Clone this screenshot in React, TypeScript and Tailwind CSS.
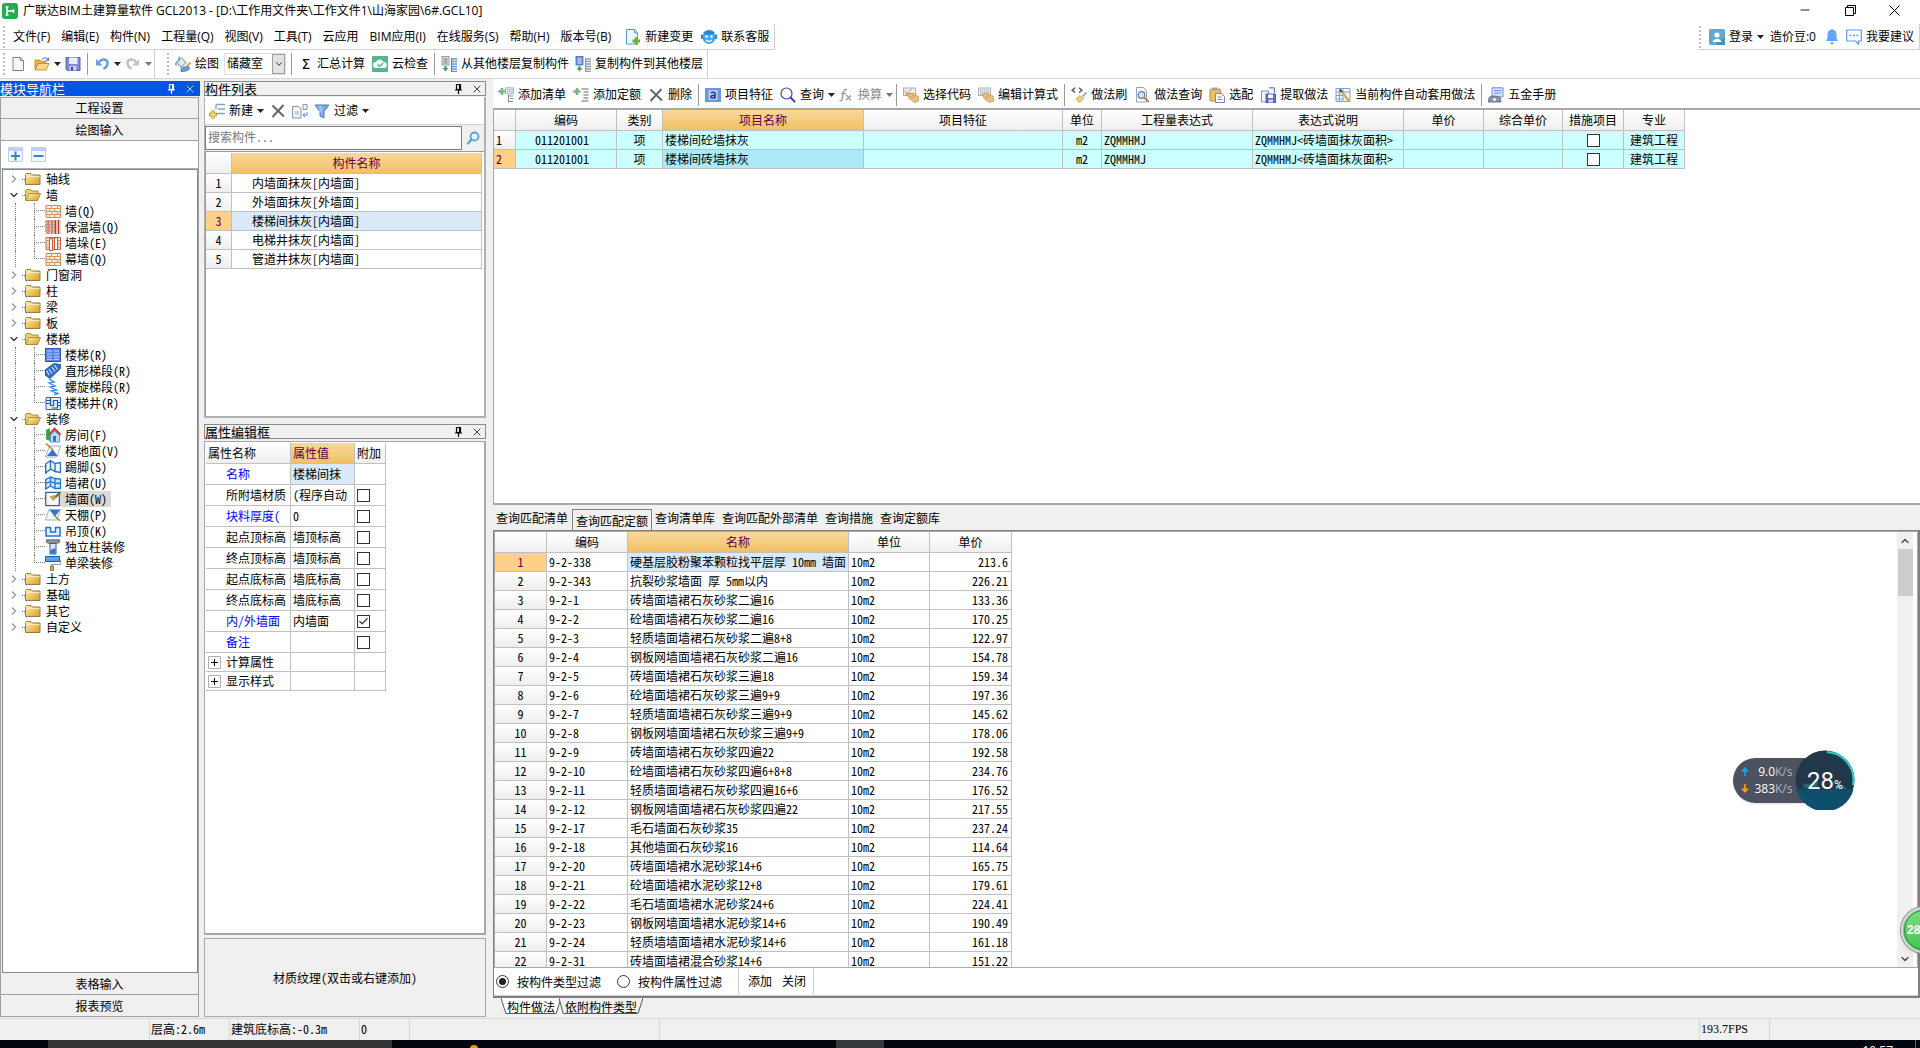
import React from 'react';
import type { ReactNode } from 'react';
import { Check, ChevronDown, ChevronRight, ChevronUp, X, Minus } from 'lucide-react';

/* ---------- icons ---------- */

function Svg({ children, size = 16 }: { children: ReactNode; size?: number }) {
  return (
    <svg width={size} height={size} viewBox="0 0 16 16" fill="none" className="block shrink-0" aria-hidden="true">
      {children}
    </svg>
  );
}

const LogoIcon = () => (
  <Svg>
    <rect width="16" height="16" rx="3" fill="#27a94f" />
    <path d="M5 3.500v9M3.500 4h3M3.500 12h3M5 8h6.500M11.500 6v4" stroke="#fff" strokeWidth="1.600" />
  </Svg>
);

const NewFileIcon = () => (
  <Svg>
    <path d="M3 1.500h7.500l3 3V14.500H3z" fill="#f4f8ff" stroke="#6f86a8" />
    <path d="M10.500 1.500v3h3" fill="#cfdcf0" stroke="#6f86a8" />
  </Svg>
);

const OpenIcon = () => (
  <Svg>
    <path d="M1 14V4h5l1 1.500h5V8" fill="#e9b44c" stroke="#b9802a" strokeWidth=".8" />
    <path d="M1 14 4 7.500h11L12 14z" fill="#f9d98a" stroke="#b9802a" strokeWidth=".8" />
    <path d="M8 3.500c2-2.500 5-2 6 .5M14.500 1.500V4.500H11.500" stroke="#6b8fb8" strokeWidth="1.200" />
  </Svg>
);

const SaveIcon = () => (
  <Svg>
    <path d="M1 1.500h14v13H2.500L1 13z" fill="#7f88da" stroke="#5560b8" />
    <rect x="4" y="1.500" width="8.500" height="6.500" fill="#e8edfb" />
    <rect x="4.500" y="10" width="7" height="4.500" fill="#c8cfe8" />
    <rect x="6" y="11" width="2" height="3.500" fill="#3a4490" />
  </Svg>
);

const UndoIcon = ({ redo = false }: { redo?: boolean }) => (
  <Svg>
    <g transform={redo ? 'matrix(-1 0 0 1 16 0)' : undefined} stroke={redo ? '#c2c2c2' : '#6d9be6'} fill="none">
      <path d="M5 6.500c2-4 8-4 8.500 0 .3 3-1.500 5-4 6.500" strokeWidth="2.600" />
      <path d="M2 3v6.500h6.500z" fill={redo ? '#c2c2c2' : '#6d9be6'} stroke="none" />
    </g>
  </Svg>
);

const BucketIcon = () => (
  <Svg>
    <path d="M1.500 6 6 1.500l5 5-5 5z" fill="#dfe8f5" stroke="#5c7fae" />
    <path d="M4 .5v5M1.500 6c-1 1-1 3 0 4" stroke="#5c7fae" />
    <path d="M6 13c2-2.500 5-2 7.500-3l1 3c-2 2-5 2.500-8.500 2.500z" fill="#6f9ade" stroke="#3c62a8" strokeWidth=".7" />
    <path d="M12 10l3.500-3.500" stroke="#e0a63a" strokeWidth="2.200" />
  </Svg>
);

const CloudCheckIcon = () => (
  <Svg>
    <rect width="16" height="16" fill="#56b88a" />
    <path d="M4 12a3 3 0 0 1 0-6 4 4 0 0 1 7.500 0A3 3 0 0 1 12 12z" fill="#fff" />
    <path d="M5.500 8.500 7.500 10.500 11 7" stroke="#56b88a" strokeWidth="1.500" />
  </Svg>
);

const FloorCopyIcon = ({ blue = false }: { blue?: boolean }) => (
  <Svg>
    <rect x="1" y="0.500" width="7" height="8.500" fill={blue ? '#6e92d6' : '#e2e2e2'} stroke={blue ? '#4566aa' : '#8a8a8a'} strokeWidth=".8" />
    <path d="M2.500 3h4M2.500 5h4M2.500 7h4" stroke={blue ? '#fff' : '#555'} strokeWidth=".8" />
    <path d="M4.500 10v2" stroke="#3da858" strokeWidth="2" />
    <path d="M1.500 12h6l-3 3.500z" fill="#3da858" />
    <path d="M11 3h5M11 5.500h5M11 8h5M11 10.500h5M11 13h5M11 15.500h5" stroke={blue ? '#8a9bb5' : '#5f92dc'} strokeWidth="1.300" />
    <path d="M10.500 2v14" stroke={blue ? '#8a9bb5' : '#4a7ccb'} />
  </Svg>
);

const NewChangeIcon = () => (
  <Svg>
    <path d="M1.500.5h8l3 3.500v11h-11z" fill="#eef7fd" stroke="#4b9fd6" />
    <path d="M9.500.5V4h3" stroke="#4b9fd6" fill="#bfe0f5" />
    <path d="M7.500 12h7.500M11.300 8.300v7.500" stroke="#63b82e" strokeWidth="3" />
  </Svg>
);

const ServiceIcon = () => (
  <Svg>
    <circle cx="8" cy="8.500" r="6.500" fill="#41a8ea" />
    <path d="M1 5.500v4.500M15 5.500v4.500" stroke="#2b87c9" strokeWidth="2" />
    <path d="M2 4c3-4 9-4 12 0l-2 1.500H4z" fill="#2b87c9" />
    <circle cx="5.500" cy="7.500" r="1.200" fill="#fff" />
    <circle cx="10.500" cy="7.500" r="1.200" fill="#fff" />
    <path d="M5 11c2 1.800 4 1.800 6 0" stroke="#fff" strokeWidth="1.200" />
  </Svg>
);

const UserIcon = () => (
  <Svg>
    <rect width="16" height="16" rx="2" fill="#62a8cf" />
    <path d="M8 13 16 8v8H8z" fill="#4c8fb5" />
    <circle cx="8" cy="6" r="2.600" fill="#fff" />
    <path d="M3.500 13c.5-4 8.500-4 9 0z" fill="#fff" />
  </Svg>
);

const BellIcon = () => (
  <Svg>
    <path d="M8 .5c-3 0-4.500 2.500-4.500 5v3.500L2 12h12l-1.500-3V5.500c0-2.500-1.500-5-4.500-5z" fill="#62a6fa" />
    <path d="M5.500 13.300h5L8 15.800z" fill="#62a6fa" />
  </Svg>
);

const CommentIcon = () => (
  <Svg>
    <path d="M.7 1h14.600v11h-2.800v3.300l-3-3.300H.7z" stroke="#5a9be8" strokeWidth="1.200" fill="#fff" />
    <path d="M3.500 6.500h2M7 6.500h2M10.500 6.500h2" stroke="#5a9be8" strokeWidth="1.300" />
  </Svg>
);

const ListAddIcon = ({ boxes = false }: { boxes?: boolean }) => (
  <Svg>
    <path d="M.3 4.500h7.200M4 1v7" stroke="#79b487" strokeWidth="2.600" />
    {boxes ? (
      <>
        <path d="M7.500.8h8v6h-8z" fill="#eef1f6" stroke="#a3adbd" />
        <path d="M9 2.800h5.500M9 4.800h5.500" stroke="#7f93b5" strokeDasharray="1.300 .9" />
        <path d="M10.500 8v7.500M11 9h4M12 11.500h3.500M11 14.500h4" stroke="#888" />
      </>
    ) : (
      <path d="M8.500 2h7M10.500 5h5M10.500 8h5M10.500 11h5M8.500 14h7" stroke="#666" strokeWidth="1.200" />
    )}
  </Svg>
);

const DeleteIcon = () => (
  <Svg>
    <path d="M2.500 2.500 14 13.500M13.500 2 2.500 14" stroke="#666" strokeWidth="1.900" />
  </Svg>
);

const FeatureIcon = () => (
  <Svg>
    <rect y="1" width="16" height="14" fill="#6c95e0" />
    <rect x="3.500" y="3" width="9" height="10" fill="#b7c8ea" />
    <path d="M6 6c1-1.200 4-1.200 4 .5v5M10 8.500c-2-.3-4 0-4 1.300 0 1.800 3 1.600 4 0" stroke="#1f3c80" strokeWidth="1.500" />
  </Svg>
);

const SearchIcon = ({ light = false }: { light?: boolean }) =>
  light ? (
    <Svg>
      <circle cx="9.500" cy="6.500" r="4" stroke="#4ea6e0" strokeWidth="1.800" />
      <path d="M6.500 9.500 2.500 14" stroke="#4ea6e0" strokeWidth="2.400" />
    </Svg>
  ) : (
    <Svg>
      <circle cx="6.500" cy="6.500" r="5.500" stroke="#3a3f9c" strokeWidth="1.200" />
      <path d="M10.500 10.500 15 15" stroke="#3a3f9c" strokeWidth="2" />
    </Svg>
  );

const FxIcon = () => (
  <Svg>
    <path d="M9 3c-2-1.500-3.300 0-3.600 2.500L4.200 12c-.3 1.800-1.500 2-2.700 1.500M3 6.500h5M8 8.500c3-1 2 5 5.500 4.500M13 8.500l-5 4.500" stroke="#a2a2a2" strokeWidth="1.500" />
  </Svg>
);

const HandIcon = ({ keys = false }: { keys?: boolean }) => (
  <Svg>
    <rect x=".5" y="1" width="12" height="7.500" fill="#eef1f6" stroke="#a8b0be" />
    {keys ? <path d="M2 3h9M2 5h9M2 7h7" stroke="#8e98a8" strokeDasharray="1.300 .8" /> : <path d="M2 3.500l2 3 5-5M2 7h8" stroke="#e07b6c" />}
    <path d="M4.500 7l5-1 6 3.500v4.500L12 15.500l-6-4z" fill="#e9c47f" stroke="#b78d46" strokeWidth=".7" />
    <path d="M7 9l3.500 2M9 7.500l3.500 2.500" stroke="#b78d46" strokeWidth=".7" />
  </Svg>
);

const BrushIcon = () => (
  <Svg>
    <path d="M4 .8 1 3.200 4 5.500M8 .8l3 2.400L8 5.500" stroke="#4a4a4a" strokeWidth="1.200" />
    <path d="M15.500 5.500 11.500 9.500" stroke="#a9a9a9" strokeWidth="1.800" />
    <path d="M8.500 8.500l4 3-3.500 4-4-3z" fill="#efcf88" stroke="#ad8535" strokeWidth=".6" />
  </Svg>
);

const DocSearchIcon = () => (
  <Svg>
    <path d="M2.500.5h7l3 3.500v11h-10z" fill="#fbfcfe" stroke="#94a3ba" />
    <circle cx="7.500" cy="8" r="3.300" fill="#cfe2f7" stroke="#5b7fae" strokeWidth="1.200" />
    <path d="M10 10.500 15 15" stroke="#b8864c" strokeWidth="2" />
  </Svg>
);

const PasteIcon = () => (
  <Svg>
    <rect x="1" y="2" width="10.500" height="12" rx="1" fill="#ecc25c" stroke="#b98d35" />
    <rect x="3.500" y=".5" width="5" height="3" fill="#9aa4b3" />
    <path d="M6.500 6.500h6l3 3v6h-9z" fill="#fff" stroke="#7a8aa0" />
    <path d="M8.500 10h4M8.500 12.500h5" stroke="#7a8aa0" />
  </Svg>
);

const ExtractIcon = () => (
  <Svg>
    <path d="M1.500 4h7v11h-7z" fill="#f2f6fc" stroke="#7d93b8" />
    <path d="M9 .8h5.500V6" stroke="#5578b5" fill="#dfe9f7" />
    <rect x="6" y="7" width="9.500" height="8.500" fill="#5b6fc4" stroke="#3c4e9c" strokeWidth=".8" />
    <rect x="8" y="7.500" width="5" height="3.500" fill="#fff" />
    <rect x="8.500" y="12.500" width="4.500" height="3" fill="#cfd6ee" />
  </Svg>
);

const AutoIcon = () => (
  <Svg>
    <path d="M1 1.500h14v13H1z" fill="#f1f6ff" stroke="#7f9fd8" />
    <path d="M1 5h14M1 8.500h7M1 12h7M4.500 1.500v13M8 1.500v13" stroke="#7f9fd8" />
    <path d="M6.500 4.500l7.500 9.500" stroke="#d3ac58" strokeWidth="2.600" />
    <path d="M5 2.500l2 2.500" stroke="#333" strokeWidth="1.800" />
  </Svg>
);

const HardwareIcon = () => (
  <Svg>
    <path d="M4 .8h11V10H4z" fill="#d7e5fa" stroke="#6b91cf" />
    <path d="M6 3.500h7M6 6h7" stroke="#6b91cf" />
    <path d="M1 10.500c3-2 8-2 11 0l1 4.500H.5z" fill="#8c99ab" stroke="#4c5a6e" strokeWidth=".8" />
    <circle cx="6.500" cy="12.500" r="1.500" fill="#fff" />
  </Svg>
);

const NewItemIcon = () => (
  <Svg>
    <path d="M7 1.500h9M9 6h7M7 10.500h9M7 1.500v5" stroke="#8ba2c4" strokeWidth="1.400" />
    <path d="M0 11.500h8M4 7.500v8" stroke="#ab9633" strokeWidth="3.400" />
    <path d="M.8 11.500h6.400M4 8.300v6.400" stroke="#f0e068" strokeWidth="1.800" />
  </Svg>
);

const CopyIcon = () => (
  <Svg>
    <path d="M.5 3.500h6l2.500 2.500v9H.5z" fill="#f2f5fa" stroke="#8593ad" />
    <path d="M2.500 8h4.500v4h-4.500z" fill="#c8d2e4" />
    <path d="M11 1.500h4v5h-4z" stroke="#8593ad" fill="#f2f5fa" />
    <path d="M15 9v3h-3.500M13 10.500l-2 1.500 2 2" stroke="#5b7ed6" />
  </Svg>
);

const FilterIcon = () => (
  <Svg>
    <path d="M1 2h14L10 8.500v6.500l-4-2V8.500z" fill="#7ea8ea" stroke="#4d78c4" />
    <path d="M3.500 3h5L8 12" fill="#b5cff7" opacity=".7" />
  </Svg>
);

const FolderIcon = ({ open }: { open: boolean }) => (
  <Svg>
    <defs>
      <linearGradient id="folderFill" x1="0" y1="0" x2="1" y2="1">
        <stop offset="0" stopColor="#fff3b8" />
        <stop offset="1" stopColor="#dc9a1c" />
      </linearGradient>
    </defs>
    {open ? (
      <>
        <path d="M.5 13V3.500L1.500 2.500H5.500L7 4h6v3" fill="#f2cf6e" stroke="#a58438" strokeWidth=".9" />
        <path d="M.7 13.500 4 6.500h11.500L12.500 13.500z" fill="url(#folderFill)" stroke="#a58438" strokeWidth=".9" />
      </>
    ) : (
      <>
        <path d="M.5 13.500V3.500L1.500 2.500H6L7.500 4h7.500v9.500z" fill="url(#folderFill)" stroke="#8d7433" strokeWidth=".9" />
        <path d="M1 5.500h14" stroke="#fff4c4" strokeWidth=".7" />
      </>
    )}
  </Svg>
);

type LeafKind = 'brick' | 'warm' | 'pier' | 'stair' | 'flight' | 'spiral' | 'well' | 'room' | 'floor' | 'skirt' | 'dado' | 'surface' | 'ceil' | 'hang' | 'column' | 'beam';

const leafArt: Record<LeafKind, ReactNode> = {
  brick: (
    <>
      <path d="M1 2.500h14.500v12H1z" fill="#fdf0df" stroke="#cf8652" />
      <path d="M1 5.500h14M1 8.500h14M1 11.500h14M6.500 2.500v3M12.500 2.500v3M4.500 5.500v3M9.500 5.500v3M6.500 8.500v3M12.500 8.500v3M4.500 11.500v3M9.500 11.500v3" stroke="#dc955f" />
    </>
  ),
  warm: (
    <>
      <rect x=".5" y="1" width="9" height="14" fill="#e6b5aa" />
      <path d="M0 3h10M0 6h10M0 9h10M0 12h10M3 1v14M7 1v14" stroke="#b5655c" strokeDasharray="2 1" />
      <path d="M10.500 1v14M13.500 1v14" stroke="#a34228" strokeWidth="1.600" />
      <path d="M12 1v14M15 1v14" stroke="#f0b08c" />
    </>
  ),
  pier: (
    <>
      <path d="M1 2.500h14.500v12H1z" fill="#fde7d6" stroke="#c8683a" />
      <path d="M1 5.500h3M13 5.500h2M1 9h3M13 9h2M1 12h3M13 12h2" stroke="#dc8b5f" />
      <path d="M4.500 3.500h3v12h-3zM9.500 2.500h3v12h-3z" fill="#fff" stroke="#c8552c" />
    </>
  ),
  stair: (
    <>
      <rect x=".5" y="1.500" width="15" height="13" fill="#5a86e0" stroke="#2c56b4" />
      <path d="M2 4h5M9 4h5M2 7h5M9 7h5M2 10h5M9 10h5M2 12.500h5M9 12.500h5" stroke="#b9cef8" strokeWidth="1.200" />
    </>
  ),
  flight: (
    <>
      <path d="M0 7 9 .5 15.500 1.500v4L5 15.500 0 12z" fill="#2f6fca" stroke="#1d4588" strokeWidth=".8" />
      <path d="M1.500 7.500 4 12M4 6l3 4.500M7 4l3 4.500M9.500 2l3 4.500" stroke="#d3e3fb" strokeWidth="1.200" />
    </>
  ),
  spiral: <path d="M4 0l5 3-5 1 6 3-5 1 6.500 3-5 1 6.500 2.500-4 1" stroke="#2f7fdc" strokeWidth="1.300" />,
  well: (
    <>
      <path d="M1 2.500h14.500v12H1z" fill="#e2ecfd" stroke="#2c6ad0" />
      <path d="M5.500 2.500v8h3V5.500h4v8M1 5.500h4M1 8.500h4M13 7.500h2M13 10.500h2M6.500 13h6" stroke="#2456b8" strokeWidth="1.200" />
    </>
  ),
  room: (
    <>
      <path d="M1 3l4-2v13l-4-1.500z" fill="#3da34f" />
      <path d="M4 8 9.500 2 15.500 8" stroke="#d33a32" strokeWidth="2.400" />
      <path d="M5.500 8l4-4 5 4v7h-9z" fill="#b9dcf8" stroke="#3a7fc8" strokeWidth=".8" />
      <rect x="8" y="9" width="3" height="5.500" fill="#2f74c4" />
    </>
  ),
  floor: (
    <>
      <path d="M4.500 3h11L12 14H.5z" fill="#f8fbff" stroke="#8b9bb5" strokeWidth=".8" />
      <path d="M2 13 7.500 6l5 7z" fill="#2f74d0" />
      <path d="M1 .5l7 6.500" stroke="#b08a40" strokeWidth="1.700" />
    </>
  ),
  skirt: <path d="M.7 5 5.500 1.500 10 4.500l5.500-1v10L10 12.500 5.500 10 .7 14zM5.500 1.500V10M10 4.500v8" fill="#f0f7ff" stroke="#1f74cf" strokeWidth="1.400" />,
  dado: <path d="M.7 4.500 5.500 2l4.500 1.500 5.500.5v9.500H10L5.500 11 .7 14zM5.500 2v9M10 3.500v10M.7 8.500l4.800-2L10 8l5.500.5" fill="#cfe5fd" stroke="#1f74cf" strokeWidth="1.300" />,
  surface: (
    <>
      <path d="M.7 1.500h13.600v13H.7z" fill="#f4f7fc" stroke="#3b5a8c" strokeWidth="1.200" />
      <path d="M4.500 5.500l4 4.500 4-4.500-3-1.500z" fill="#c9a050" />
      <path d="M10.500 6l5-5" stroke="#7c6430" strokeWidth="2" />
    </>
  ),
  ceil: (
    <>
      <path d="M4 2.500h11.500L12 13H.5z" fill="#f8fbff" stroke="#8b9bb5" strokeWidth=".8" />
      <path d="M4.500 3h10.500l-5 6.500z" fill="#2f74d0" />
      <path d="M8 7l7 7" stroke="#b08a40" strokeWidth="1.700" />
    </>
  ),
  hang: <path d="M1 4.500h4.500V9h5V4.500H15v8.500H1z" fill="#e3f0ff" stroke="#1f74cf" strokeWidth="1.500" />,
  column: (
    <>
      <path d="M1.500.8h13v2.500l-2 1h-9l-2-1z" fill="#8f979f" stroke="#4b5158" strokeWidth=".8" />
      <path d="M5 4.500h6v10.500H5z" fill="#dfe8f4" stroke="#3c5a8c" />
      <path d="M5.500 14.500V11l5-2v5.500z" fill="#2f74d0" />
    </>
  ),
  beam: (
    <>
      <path d="M.5 1.500h14v5H.5z" fill="#58a6ea" stroke="#1a5ca8" />
      <path d="M15.500 5v4.500H6.500v2" stroke="#909aa6" />
      <path d="M5.500 11h3v4.500h-3z" fill="#e3a566" stroke="#8c5a24" strokeWidth=".8" />
    </>
  ),
};

const PinIcon = () => (
  <svg width="9" height="12" viewBox="0 0 9 12" className="block" aria-hidden="true">
    <path d="M2.500 1.500h4v5h-4zM5.500 1.500v5M1 7h7M4.500 7v4" fill="none" stroke="currentColor" strokeWidth="1.200" />
  </svg>
);

const Caret = ({ muted = false }: { muted?: boolean }) => (
  <svg width="7" height="4" viewBox="0 0 7 4" className="block shrink-0" aria-hidden="true">
    <path d="M0 0h7L3.500 4z" fill={muted ? '#777' : '#222'} />
  </svg>
);

/* ---------- small building blocks ---------- */

const Grip = () => <span className="h-[22px] w-[2px] shrink-0 border-l-2 border-dotted border-[#bdbdbd]" />;
const Sep = () => <span className="h-[22px] w-px shrink-0 bg-[#9a9a9a]" />;

function ToolButton({ icon, children, muted = false, caret = false }: { icon?: ReactNode; children?: ReactNode; muted?: boolean; caret?: boolean }) {
  return (
    <button type="button" className={`flex shrink-0 items-center gap-1 leading-4 whitespace-nowrap ${muted ? 'text-[#8a8a8a]' : ''}`}>
      {icon}
      {children && <span>{children}</span>}
      {caret && <Caret muted={muted} />}
    </button>
  );
}

function PanelTitle({ children, active = false }: { children: ReactNode; active?: boolean }) {
  return (
    <div className={`flex h-[15px] shrink-0 items-center text-[13px] leading-[14px] ${active ? 'bg-[#0055e5] text-white' : 'border border-[#8a8a8a] bg-[#f0f0f0] text-black'}`}>
      <h2 className="flex-1 whitespace-nowrap">{children}</h2>
      <button type="button" aria-label="固定" className="mr-2"><PinIcon /></button>
      <button type="button" aria-label="关闭" className={active ? 'mr-1' : 'mr-0.5'}><X size={12} strokeWidth={1.500} /></button>
    </div>
  );
}

function Tick({ label, checked = false }: { label: string; checked?: boolean }) {
  return (
    <label className="relative inline-grid size-[13px] place-items-center align-middle">
      <input type="checkbox" aria-label={label} defaultChecked={checked} className="peer col-start-1 row-start-1 size-[13px] appearance-none border border-[#333] bg-white" />
      <Check size={11} strokeWidth={3} className="pointer-events-none invisible col-start-1 row-start-1 text-[#444] peer-checked:visible" />
    </label>
  );
}

const headCell = 'h-[21px] border-r border-b border-[#c0c0c0] bg-linear-to-b from-white to-[#efefef] p-0 font-normal';
const headHot = 'h-[21px] border-r border-b border-[#c0c0c0] bg-linear-to-b from-[#f9d79c] to-[#f1c062] p-0 font-normal text-[#5c0050]';
const numCell = 'border-r border-b border-[#c0c0c0] bg-linear-to-b from-white to-[#eeeeee] p-0 font-normal';
const numHot = 'border-r border-b border-[#c0c0c0] bg-[#ffd08a] p-0 font-normal text-[#5c0050]';
const cell = 'overflow-hidden border-r border-b border-[#c0c0c0] p-0 whitespace-nowrap';

/* ---------- data ---------- */

const menus = ['文件(F)', '编辑(E)', '构件(N)', '工程量(Q)', '视图(V)', '工具(T)', '云应用', 'BIM应用(I)', '在线服务(S)', '帮助(H)', '版本号(B)'];

type Group = { name: string; leaves?: [string, LeafKind][] };
const tree: Group[] = [
  { name: '轴线' },
  { name: '墙', leaves: [['墙(Q)', 'brick'], ['保温墙(Q)', 'warm'], ['墙垛(E)', 'pier'], ['幕墙(Q)', 'brick']] },
  { name: '门窗洞' },
  { name: '柱' },
  { name: '梁' },
  { name: '板' },
  { name: '楼梯', leaves: [['楼梯(R)', 'stair'], ['直形梯段(R)', 'flight'], ['螺旋梯段(R)', 'spiral'], ['楼梯井(R)', 'well']] },
  {
    name: '装修',
    leaves: [['房间(F)', 'room'], ['楼地面(V)', 'floor'], ['踢脚(S)', 'skirt'], ['墙裙(U)', 'dado'], ['墙面(W)', 'surface'], ['天棚(P)', 'ceil'], ['吊顶(K)', 'hang'], ['独立柱装修', 'column'], ['单梁装修', 'beam']],
  },
  { name: '土方' },
  { name: '基础' },
  { name: '其它' },
  { name: '自定义' },
];

const components = ['内墙面抹灰[内墙面]', '外墙面抹灰[外墙面]', '楼梯间抹灰[内墙面]', '电梯井抹灰[内墙面]', '管道井抹灰[内墙面]'];

const props: { name: string; value: string; blue?: boolean; tick?: boolean; checked?: boolean }[] = [
  { name: '名称', value: '楼梯间抹', blue: true },
  { name: '所附墙材质', value: '(程序自动', tick: true },
  { name: '块料厚度(', value: '0', blue: true, tick: true },
  { name: '起点顶标高', value: '墙顶标高', tick: true },
  { name: '终点顶标高', value: '墙顶标高', tick: true },
  { name: '起点底标高', value: '墙底标高', tick: true },
  { name: '终点底标高', value: '墙底标高', tick: true },
  { name: '内/外墙面', value: '内墙面', blue: true, tick: true, checked: true },
  { name: '备注', value: '', blue: true, tick: true },
];

const quotas: [string, string, string][] = [
  ['9-2-338', '硬基层胶粉聚苯颗粒找平层厚 10mm 墙面', '213.6'],
  ['9-2-343', '抗裂砂浆墙面 厚 5mm以内', '226.21'],
  ['9-2-1', '砖墙面墙裙石灰砂浆二遍16', '133.36'],
  ['9-2-2', '砼墙面墙裙石灰砂浆二遍16', '170.25'],
  ['9-2-3', '轻质墙面墙裙石灰砂浆二遍8+8', '122.97'],
  ['9-2-4', '钢板网墙面墙裙石灰砂浆二遍16', '154.78'],
  ['9-2-5', '砖墙面墙裙石灰砂浆三遍18', '159.34'],
  ['9-2-6', '砼墙面墙裙石灰砂浆三遍9+9', '197.36'],
  ['9-2-7', '轻质墙面墙裙石灰砂浆三遍9+9', '145.62'],
  ['9-2-8', '钢板网墙面墙裙石灰砂浆三遍9+9', '178.06'],
  ['9-2-9', '砖墙面墙裙石灰砂浆四遍22', '192.58'],
  ['9-2-10', '砼墙面墙裙石灰砂浆四遍6+8+8', '234.76'],
  ['9-2-11', '轻质墙面墙裙石灰砂浆四遍16+6', '176.52'],
  ['9-2-12', '钢板网墙面墙裙石灰砂浆四遍22', '217.55'],
  ['9-2-17', '毛石墙面石灰砂浆35', '237.24'],
  ['9-2-18', '其他墙面石灰砂浆16', '114.64'],
  ['9-2-20', '砖墙面墙裙水泥砂浆14+6', '165.75'],
  ['9-2-21', '砼墙面墙裙水泥砂浆12+8', '179.61'],
  ['9-2-22', '毛石墙面墙裙水泥砂浆24+6', '224.41'],
  ['9-2-23', '钢板网墙面墙裙水泥砂浆14+6', '190.49'],
  ['9-2-24', '轻质墙墙面墙裙水泥砂浆14+6', '161.18'],
  ['9-2-31', '砖墙面墙裙混合砂浆14+6', '151.22'],
];

/* ---------- regions ---------- */

function TitleBar() {
  return (
    <header className="flex h-[24px] shrink-0 items-center pl-0.5 pb-0.5">
      <LogoIcon />
      <h1 className="ml-[5px] flex-1 leading-4 whitespace-nowrap">广联达BIM土建算量软件 GCL2013 - [D:\工作用文件夹\工作文件1\山海家园\6#.GCL10]</h1>
      <div className="flex items-center gap-[33px] pr-5 pb-0.5">
        <button type="button" aria-label="最小化"><Minus size={14} strokeWidth={1.500} /></button>
        <button type="button" aria-label="还原">
          <svg width="11" height="11" viewBox="0 0 11 11" fill="none" stroke="#000" className="block">
            <path d="M.5 2.500h8v8h-8zM2.500 2.500v-2h8v8h-2" />
          </svg>
        </button>
        <button type="button" aria-label="关闭窗口">
          <svg width="11" height="11" viewBox="0 0 11 11" fill="none" stroke="#000" className="block">
            <path d="M.5.5l10 10M10.500.5l-10 10" />
          </svg>
        </button>
      </div>
    </header>
  );
}

function MenuRow() {
  return (
    <div className="flex h-[26px] shrink-0 justify-between">
      <nav className="flex items-center border-r border-b border-[#d0d0d0] pr-[5px] pl-[3px]">
        <Grip />
        <div className="ml-2 flex items-center gap-[11px]">
          {menus.map((m) => (
            <button type="button" key={m} className="leading-4 whitespace-nowrap">{m}</button>
          ))}
        </div>
        <div className="ml-[14px] flex items-center gap-2">
          <ToolButton icon={<NewChangeIcon />}>新建变更</ToolButton>
          <ToolButton icon={<ServiceIcon />}>联系客服</ToolButton>
        </div>
      </nav>
      <div className="flex items-center border-r border-b border-[#d0d0d0] pr-[5px] pl-0.5">
        <Grip />
        <span className="ml-2"><ToolButton icon={<UserIcon />} caret>登录</ToolButton></span>
        <span className="ml-1.5 leading-4">造价豆:0</span>
        <span className="ml-2"><ToolButton icon={<BellIcon />} /></span>
        <span className="ml-1.5"><ToolButton icon={<CommentIcon />}>我要建议</ToolButton></span>
      </div>
    </div>
  );
}

function MainToolbar() {
  return (
    <div className="flex h-[29px] shrink-0 border-b border-[#d6d6d6]">
      <div className="flex items-center border-r border-[#d0d0d0] pr-0.5 pl-[3px]">
        <Grip />
        <span className="ml-[5px]"><ToolButton icon={<NewFileIcon />} /></span>
        <span className="ml-2"><ToolButton icon={<OpenIcon />} caret /></span>
        <span className="ml-1 mr-[6px]"><ToolButton icon={<SaveIcon />} /></span>
        <Sep />
        <span className="ml-[6px]"><ToolButton icon={<UndoIcon />} caret /></span>
        <span className="ml-1"><ToolButton icon={<UndoIcon redo />} caret muted /></span>
      </div>
      <div className="ml-3 flex items-center border-r border-[#d0d0d0] pr-1">
        <Grip />
        <span className="ml-1.5"><ToolButton icon={<BucketIcon />}>绘图</ToolButton></span>
        <div className="mx-[5px] flex h-[22px] w-[62px] items-center border border-[#e0e0e0]">
          <label className="relative flex h-full w-full items-center">
            <select aria-label="构件类型" className="h-full w-full appearance-none bg-white pl-[2px] leading-4 outline-none">
              <option>储藏室</option>
            </select>
            <span className="pointer-events-none absolute right-0 grid h-[20px] w-[13px] place-items-center border border-[#a0a0a0] bg-[#e3e3e3]"><ChevronDown size={10} strokeWidth={2} /></span>
          </label>
        </div>
        <Sep />
        <span className="ml-1.5 w-[16px] text-center font-['DejaVu_Sans',sans-serif] text-[14px] leading-4">Σ</span>
        <span className="mr-[7px] ml-[3px]"><ToolButton>汇总计算</ToolButton></span>
        <span className="mr-1.5"><ToolButton icon={<CloudCheckIcon />}>云检查</ToolButton></span>
        <Sep />
        <span className="mx-1.5"><ToolButton icon={<FloorCopyIcon />}>从其他楼层复制构件</ToolButton></span>
        <ToolButton icon={<FloorCopyIcon blue />}>复制构件到其他楼层</ToolButton>
      </div>
    </div>
  );
}

function TreeLeaf({ name, kind, last }: { name: string; kind: LeafKind; last: boolean }) {
  const selected = name === '墙面(W)';
  return (
    <li className="flex h-4 items-center pl-3">
      <span className="h-full w-[19px] shrink-0 border-l border-dotted border-[#808080]" />
      <span className="flex h-full w-[11px] shrink-0 flex-col">
        <span className="h-1/2 border-b border-l border-dotted border-[#808080]" />
        <span className={last ? 'h-1/2' : 'h-1/2 border-l border-dotted border-[#808080]'} />
      </span>
      <button type="button" className={`flex h-4 items-center leading-4 whitespace-nowrap ${selected ? 'bg-[#d9d9d9]' : ''}`}>
        <Svg>{leafArt[kind]}</Svg>
        <span className="px-1">{name}</span>
      </button>
    </li>
  );
}

function NavPanel() {
  const wide = 'grid h-[22px] w-full shrink-0 place-items-center border-b border-[#a0a0a0] bg-[#f0f0f0] leading-4';
  return (
    <aside className="flex w-[200px] shrink-0 flex-col bg-[#f0f0f0] pt-0.5 pb-px">
      <PanelTitle active>模块导航栏</PanelTitle>
      <div className="mt-px mr-px flex min-h-0 flex-1 flex-col border-r border-l border-[#a0a0a0]">
        <button type="button" className={`${wide} border-t`}>工程设置</button>
        <button type="button" className={wide}>绘图输入</button>
        <div className="flex h-[28px] shrink-0 items-center gap-2 border-b border-[#b0b0b0] bg-white pl-[7px]">
          <button type="button" aria-label="全部展开">
            <svg width="15" height="15" viewBox="0 0 15 15" className="block"><path d="M.5.5h14v14H.5z" fill="#f3f7ff" stroke="#bdd0f5" /><path d="M0 0h15v4H0z" fill="#bdd0f5" /><path d="M3 9h9M7.500 4.500v9" stroke="#3686c4" strokeWidth="2" /></svg>
          </button>
          <button type="button" aria-label="全部折叠">
            <svg width="15" height="15" viewBox="0 0 15 15" className="block"><path d="M.5.5h14v14H.5z" fill="#f3f7ff" stroke="#bdd0f5" /><path d="M0 0h15v4H0z" fill="#bdd0f5" /><path d="M2.500 9h10" stroke="#3686c4" strokeWidth="2" /></svg>
          </button>
        </div>
        <ul className="ml-px min-h-0 flex-1 overflow-hidden border border-[#828790] bg-white pt-px">
          {tree.map((g) => (
            <li key={g.name}>
              <div className="flex h-4 items-center pl-[5px]">
                <span className="w-3 shrink-0 text-[#444]">
                  {g.leaves ? <ChevronDown size={12} strokeWidth={3} /> : <ChevronRight size={12} strokeWidth={3} className="text-[#a0a0a0]" />}
                </span>
                <span className="ml-0.5 w-[3px] shrink-0 border-b border-dotted border-[#808080]" />
                <FolderIcon open={!!g.leaves} />
                <span className="ml-[5px] leading-4 whitespace-nowrap">{g.name}</span>
              </div>
              {g.leaves && (
                <ul>
                  {g.leaves.map(([n, k], i) => (
                    <TreeLeaf key={n} name={n} kind={k} last={i === g.leaves!.length - 1} />
                  ))}
                </ul>
              )}
            </li>
          ))}
        </ul>
        <button type="button" className={wide}>表格输入</button>
        <button type="button" className={wide}>报表预览</button>
      </div>
    </aside>
  );
}

function ComponentPanels() {
  return (
    <section className="ml-1 flex w-[282px] shrink-0 flex-col pt-0.5">
      <div className="flex h-[337px] shrink-0 flex-col">
        <PanelTitle>构件列表</PanelTitle>
        <div className="mt-px flex min-h-0 flex-1 flex-col border-r-2 border-b-2 border-l border-[#b0b0b0] bg-white">
          <div className="flex h-[28px] shrink-0 items-center gap-1.5 border-b border-[#d0d0d0] pl-1 font-['Open_Sans','Noto_Sans_CJK_SC',sans-serif]">
            <ToolButton icon={<NewItemIcon />} caret>新建</ToolButton>
            <ToolButton icon={<DeleteIcon />} />
            <ToolButton icon={<CopyIcon />} />
            <ToolButton icon={<FilterIcon />} caret>过滤</ToolButton>
          </div>
          <div className="flex h-[26px] shrink-0 items-center bg-[#f0f0f0]">
            <input aria-label="搜索构件" placeholder="搜索构件..." className="h-[24px] w-[257px] border border-[#7a7a7a] bg-white px-0.5 pb-1 text-[12px] text-black outline-none placeholder:text-[#777]" />
            <button type="button" aria-label="搜索" className="mx-auto"><SearchIcon light /></button>
          </div>
          <div className="min-h-0 flex-1 overflow-hidden border-t border-l border-[#9a9a9a] pt-px">
            <table className="w-[276px] table-fixed border-separate border-spacing-0">
              <colgroup><col className="w-[26px]" /><col /></colgroup>
              <thead>
                <tr><th className={headCell} aria-label="序号" /><th className={headHot}>构件名称</th></tr>
              </thead>
              <tbody>
                {components.map((c, i) => (
                  <tr key={c} className="h-[19px]">
                    <th scope="row" className={i === 2 ? numHot : numCell}>{i + 1}</th>
                    <td className={`${cell} pl-5 ${i === 2 ? 'bg-[#d9e9f7]' : ''}`}>{c}</td>
                  </tr>
                ))}
              </tbody>
            </table>
          </div>
        </div>
      </div>
      <div className="mt-1.5 flex min-h-0 flex-1 flex-col">
        <PanelTitle>属性编辑框</PanelTitle>
        <div className="mt-0.5 min-h-0 flex-1 overflow-hidden border-t border-r-2 border-b-2 border-l border-[#a8a8a8] bg-white pt-px pl-px">
          <table className="w-[180px] table-fixed border-separate border-spacing-0">
            <colgroup><col className="w-[85px]" /><col className="w-[64px]" /><col className="w-[31px]" /></colgroup>
            <thead>
              <tr>
                <th className={`${headCell} pl-0.5 text-left`}>属性名称</th>
                <th className={`${headHot} pl-0.5 text-left`}>属性值</th>
                <th className={`${headCell} pl-0.5 text-left`}>附加</th>
              </tr>
            </thead>
            <tbody>
              {props.map((p, i) => (
                <tr key={p.name} className="h-[21px]">
                  <td className={`${cell} pl-[20px] ${p.blue ? 'text-[#0000ff]' : ''}`}>{p.name}</td>
                  <td className={`${cell} pl-0.5 ${i === 0 ? 'bg-[#d9e9f7]' : ''}`}>{p.value}</td>
                  <td className={`${cell} pl-0.5 leading-none`}>{p.tick && <Tick label={`${p.name} 附加`} checked={p.checked} />}</td>
                </tr>
              ))}
              {['计算属性', '显示样式'].map((n) => (
                <tr key={n} className="h-[19px]">
                  <td className={cell}>
                    <span className="flex items-center gap-[5px] pl-0.5">
                      <button type="button" aria-label={`展开${n}`}>
                        <svg width="13" height="13" viewBox="0 0 13 13" className="block"><path d="M.5.5h12v12H.5z" fill="#fff" stroke="#b0b0b0" /><path d="M3 6.500h7M6.500 3v7" stroke="#000" /></svg>
                      </button>
                      {n}
                    </span>
                  </td>
                  <td className={cell} />
                  <td className={cell} />
                </tr>
              ))}
            </tbody>
          </table>
        </div>
      </div>
      <button type="button" className="mt-[3px] mb-px grid h-[79px] shrink-0 place-items-center border border-[#a8a8a8] bg-[#f0f0f0]">材质纹理(双击或右键添加)</button>
    </section>
  );
}

function ItemToolbar() {
  return (
    <div className="flex h-[29px] shrink-0 items-center gap-[7px] bg-white pt-0.5 pl-[5px] font-['Open_Sans','Noto_Sans_CJK_SC',sans-serif]">
      <ToolButton icon={<ListAddIcon boxes />}>添加清单</ToolButton>
      <ToolButton icon={<ListAddIcon />}>添加定额</ToolButton>
      <ToolButton icon={<DeleteIcon />}>删除</ToolButton>
      <span className="-mx-px h-[22px] w-px shrink-0 bg-[#9a9a9a]" />
      <ToolButton icon={<FeatureIcon />}>项目特征</ToolButton>
      <ToolButton icon={<SearchIcon />} caret>查询</ToolButton>
      <span className="-ml-1"><ToolButton icon={<FxIcon />} caret muted>换算</ToolButton></span>
      <span className="-mr-px -ml-1 h-[22px] w-px shrink-0 bg-[#9a9a9a]" />
      <ToolButton icon={<HandIcon />}>选择代码</ToolButton>
      <ToolButton icon={<HandIcon keys />}>编辑计算式</ToolButton>
      <span className="-mx-px h-[22px] w-px shrink-0 bg-[#9a9a9a]" />
      <ToolButton icon={<BrushIcon />}>做法刷</ToolButton>
      <ToolButton icon={<DocSearchIcon />}>做法查询</ToolButton>
      <ToolButton icon={<PasteIcon />}>选配</ToolButton>
      <ToolButton icon={<ExtractIcon />}>提取做法</ToolButton>
      <ToolButton icon={<AutoIcon />}>当前构件自动套用做法</ToolButton>
      <span className="-mx-px h-[22px] w-px shrink-0 bg-[#9a9a9a]" />
      <ToolButton icon={<HardwareIcon />}>五金手册</ToolButton>
    </div>
  );
}

function ItemTable() {
  const heads = ['编码', '类别', '项目名称', '项目特征', '单位', '工程量表达式', '表达式说明', '单价', '综合单价', '措施项目', '专业'];
  return (
    <div className="h-[397px] shrink-0 overflow-hidden border-t-2 border-b-2 border-l border-[#a8a8a8] bg-white">
      <table className="w-[1191px] table-fixed border-separate border-spacing-0">
        <colgroup>
          <col className="w-[22px]" /><col className="w-[101px]" /><col className="w-[46px]" /><col className="w-[201px]" />
          <col className="w-[199px]" /><col className="w-[39px]" /><col className="w-[151px]" /><col className="w-[151px]" />
          <col className="w-[80px]" /><col className="w-[79px]" /><col className="w-[61px]" /><col className="w-[61px]" />
        </colgroup>
        <thead>
          <tr>
            <th className={headCell} aria-label="序号" />
            {heads.map((h) => <th key={h} className={h === '项目名称' ? headHot : headCell}>{h}</th>)}
          </tr>
        </thead>
        <tbody>
          {['楼梯间砼墙抹灰', '楼梯间砖墙抹灰'].map((n, i) => (
            <tr key={n} className="h-[19px] bg-[#ccffff]">
              <th scope="row" className={`${i ? numHot : numCell} pl-0.5 text-left`}>{i + 1}</th>
              <td className={`${cell} pr-2 text-center`}>011201001</td>
              <td className={`${cell} text-center`}>项</td>
              <td className={`${cell} pl-0.5 ${i ? 'bg-[#aee9f8]' : ''}`}>{n}</td>
              <td className={cell} />
              <td className={`${cell} text-center`}>m2</td>
              <td className={`${cell} pl-0.5`}>ZQMMHMJ</td>
              <td className={`${cell} pl-0.5`}>ZQMMHMJ&lt;砖墙面抹灰面积&gt;</td>
              <td className={cell} />
              <td className={cell} />
              <td className={`${cell} text-center leading-none`}><Tick label={`措施项目 ${i + 1}`} /></td>
              <td className={`${cell} text-center`}>建筑工程</td>
            </tr>
          ))}
        </tbody>
      </table>
    </div>
  );
}

function QuerySection() {
  const tabs = ['查询匹配清单', '查询匹配定额', '查询清单库', '查询匹配外部清单', '查询措施', '查询定额库'];
  return (
    <>
      <div role="tablist" className="mt-1 flex h-[21px] shrink-0 pl-[3px]">
        {tabs.map((t, i) => (
          <button type="button" role="tab" aria-selected={i === 1} key={t} className={i === 1 ? 'h-full border-t border-r border-l border-[#808080] px-[3px] pt-0.5 leading-4 whitespace-nowrap' : `mb-1 leading-4 whitespace-nowrap ${i === 0 ? 'mr-1' : 'mr-1 ml-[3px]'}`}>
            {t}
          </button>
        ))}
      </div>
      <div className="flex min-h-0 flex-1 flex-col border-t border-r-2 border-b-2 border-l border-[#808080] bg-white">
        <div className="flex min-h-0 flex-1 justify-between border border-[#a8a8b0]">
          <div className="min-w-0 overflow-hidden">
            <table className="w-[517px] table-fixed border-separate border-spacing-0">
              <colgroup><col className="w-[52px]" /><col className="w-[81px]" /><col className="w-[221px]" /><col className="w-[81px]" /><col className="w-[82px]" /></colgroup>
              <thead>
                <tr>
                  <th className={headCell} aria-label="序号" />
                  <th className={headCell}>编码</th>
                  <th className={headHot}>名称</th>
                  <th className={headCell}>单位</th>
                  <th className={headCell}>单价</th>
                </tr>
              </thead>
              <tbody>
                {quotas.map(([code, name, price], i) => (
                  <tr key={code} className="h-[19px]">
                    <th scope="row" className={i === 0 ? numHot : numCell}>{i + 1}</th>
                    <td className={`${cell} pl-0.5`}>{code}</td>
                    <td className={`${cell} pl-0.5 ${i === 0 ? 'bg-[#d9e9f7]' : ''}`}>{name}</td>
                    <td className={`${cell} pl-0.5`}>10m2</td>
                    <td className={`${cell} pr-[3px] text-right`}>{price}</td>
                  </tr>
                ))}
              </tbody>
            </table>
          </div>
          <div className="mr-1 flex w-[16px] shrink-0 flex-col items-center bg-[#f0f0f0] text-[#505050]">
            <button type="button" aria-label="向上滚动" className="grid h-[17px] place-items-center"><ChevronUp size={12} strokeWidth={3} /></button>
            <span className="h-[47px] w-[15px] bg-[#cdcdcd]" />
            <button type="button" aria-label="向下滚动" className="mt-auto grid h-[17px] place-items-center"><ChevronDown size={12} strokeWidth={3} /></button>
          </div>
        </div>
        <div className="flex h-[28px] shrink-0 items-center border-b border-[#d0d0d0] pl-[2px]">
          {['按构件类型过滤', '按构件属性过滤'].map((t, i) => (
            <label key={t} className="mr-4 flex items-center gap-2 leading-4 whitespace-nowrap">
              <input type="radio" name="filter" defaultChecked={i === 0} className="grid size-[13px] appearance-none place-items-center rounded-full border border-[#333] bg-white checked:before:size-[7px] checked:before:rounded-full checked:before:bg-[#222] checked:before:content-['']" />
              {t}
            </label>
          ))}
          <div className="flex h-full items-center gap-[10px] border-r border-l border-[#d0d0d0] pr-[7px] pl-[9px] font-['Open_Sans','Noto_Sans_CJK_SC',sans-serif]">
            <ToolButton>添加</ToolButton>
            <ToolButton>关闭</ToolButton>
          </div>
        </div>
      </div>
      <div role="tablist" className="flex h-[20px] shrink-0 pl-2">
        {['构件做法', '依附构件类型'].map((t, i) => (
          <button type="button" role="tab" aria-selected={i === 0} key={t} className={`relative h-[16px] px-[6px] leading-[15px] whitespace-nowrap ${i ? '-ml-[2px]' : ''}`}>
            <svg className="absolute inset-0 h-full w-full" viewBox="0 0 100 16" preserveAspectRatio="none" aria-hidden="true">
              <path d={i ? 'M0 0 5 15.500H94L100 0' : 'M0 0 8 15.500H92L100 0'} fill={i ? '#f0f0f0' : '#fff'} stroke="#555" vectorEffect="non-scaling-stroke" />
            </svg>
            <span className="relative">{t}</span>
          </button>
        ))}
      </div>
    </>
  );
}

function StatusBar() {
  return (
    <footer className="flex h-[22px] shrink-0 border-t border-[#d6d6d6] bg-[#f0f0f0] leading-[20px] whitespace-nowrap">
      <span className="w-[149px] shrink-0" />
      <span className="w-[80px] shrink-0 border-l border-[#d6d6d6] pl-px">层高:2.6m</span>
      <span className="w-[130px] shrink-0 border-l border-[#d6d6d6] pl-px">建筑底标高:-0.3m</span>
      <span className="w-[50px] shrink-0 border-l border-[#d6d6d6] pl-px">0</span>
      <span className="w-[250px] shrink-0 border-l border-[#d6d6d6]" />
      <span className="flex-1 border-l border-[#d6d6d6]" />
      <span className="w-[70px] shrink-0 border-l border-[#d6d6d6] pl-px font-['Liberation_Serif',serif] text-[12px]">193.7FPS</span>
      <span className="w-[151px] shrink-0 border-l border-[#d6d6d6]" />
    </footer>
  );
}

function Taskbar() {
  return (
    <div className="flex h-2 shrink-0 overflow-hidden bg-[#02060c]">
      <span className="ml-12 w-[344px] bg-[#333333]" />
      <svg width="14" height="8" viewBox="0 0 14 8" className="ml-[75px] block"><circle cx="7" cy="9" r="4" fill="#e0a000" /></svg>
      <span className="ml-[355px] w-[48px] bg-[#34373c]" />
      <span className="ml-auto border-r border-[#666] pt-[3px] pr-[22px] text-[12px] leading-4 text-white">10:57</span>
      <span className="w-1" />
    </div>
  );
}

function Floaters() {
  return (
    <>
      <div className="absolute top-[750px] right-[65px] flex items-center font-['Open_Sans',sans-serif]">
        <div className="-mr-7 flex h-[45px] w-[90px] flex-col justify-center rounded-l-full bg-[#4c5260] pl-2 text-[12px] leading-[17px] text-white shadow">
          {[['9.0', '#12a5f4', 'M4 0 8 4.500H4.800V9H3.200V4.500H0z'], ['383', '#ff9d0a', 'M4 9 0 4.500H3.200V0h1.600v4.500H8z']].map(([v, c, d]) => (
            <span key={v} className="flex items-center">
              <svg width="8" height="9" viewBox="0 0 8 9"><path d={d} fill={c} /></svg>
              <span className="w-[26px] text-right">{v}</span>
              <span className="text-[#b4b8c0]">K/s</span>
            </span>
          ))}
        </div>
        <div className="relative size-[60px]">
          <svg width="60" height="60" viewBox="0 0 60 60" className="absolute inset-0">
            <circle cx="30" cy="30" r="29.500" fill="#22384a" />
            <path d="M1.500 39.500a29.500 29.500 0 0 0 57 0z" fill="#104f6c" />
            <ellipse cx="13" cy="36" rx="5" ry="2.500" fill="#256377" />
            <path d="M16 39c0-6 5-12 7-11 0 5-1 8-1 11zM40 39c2-6 8-6 12 0z" fill="#256377" />
            <path d="M32 2a28 28 0 0 1 26 33" fill="none" stroke="#22d3c5" strokeWidth="2" />
          </svg>
          <span className="relative flex h-full items-baseline justify-center pt-[19px] font-['Roboto',sans-serif] text-white">
            <span className="text-[24px] leading-6">28</span>
            <span className="text-[12px]">%</span>
          </span>
        </div>
      </div>
      <div className="absolute top-[907px] -right-[27px] flex size-[46px] items-center rounded-full border-2 border-[#d6d6d6] bg-linear-to-b from-[#7fdc86] to-[#3cc64c] pl-1 font-['Liberation_Sans',sans-serif] text-[12px] font-bold text-white shadow-md ring-1 ring-[#8a8a8a] outline-1 -outline-offset-4 outline-[#2b8a4a]">28</div>
    </>
  );
}

export default function App() {
  return (
    <div className="relative flex h-screen flex-col overflow-hidden bg-white font-['Open_Sans','Noto_Sans_CJK_SC',sans-serif] text-[12px] leading-4 text-black">
      <TitleBar />
      <MenuRow />
      <MainToolbar />
      <main className="flex min-h-0 flex-1 bg-[#f0f0f0] font-['Noto_Sans_Mono_CJK_SC','Noto_Sans_CJK_SC',sans-serif]">
        <NavPanel />
        <ComponentPanels />
        <section className="ml-[7px] flex min-w-0 flex-1 flex-col">
          <ItemToolbar />
          <ItemTable />
          <QuerySection />
        </section>
      </main>
      <div className="shrink-0 font-['Noto_Sans_Mono_CJK_SC','Noto_Sans_CJK_SC',sans-serif]"><StatusBar /></div>
      <Taskbar />
      <Floaters />
    </div>
  );
}
